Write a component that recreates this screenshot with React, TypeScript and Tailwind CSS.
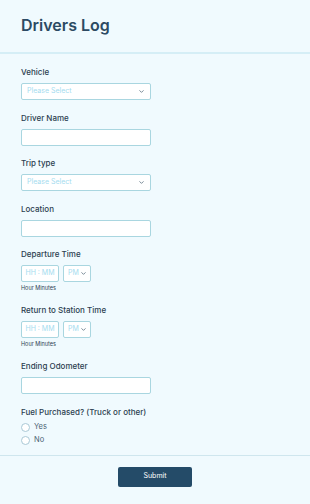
import { ChevronDown } from 'lucide-react';

function Label({ children }: { children: React.ReactNode }) {
  return <div className="text-[8px] font-medium text-[#2c3e50] leading-[10px] mb-[6px]">{children}</div>;
}

function SelectBox() {
  return (
    <div className="w-[130px] h-[17px] bg-white border border-[#a9d6e0] rounded-[2px] flex items-center justify-between px-[5px]">
      <span className="text-[7px] text-[#a5dcef]">Please Select</span>
      <ChevronDown size={7} strokeWidth={2.5} className="text-[#4a6274]" />
    </div>
  );
}

function TextBox() {
  return <div className="w-[130px] h-[17px] bg-white border border-[#a9d6e0] rounded-[2px]" />;
}

function TimeField({ label }: { label: string }) {
  return (
    <div>
      <Label>{label}</Label>
      <div className="flex gap-[4px]">
        <div className="w-[38px] h-[17px] bg-white border border-[#a9d6e0] rounded-[2px] flex items-center justify-center">
          <span className="text-[7px] text-[#a5dcef] whitespace-nowrap">HH : MM</span>
        </div>
        <div className="w-[28px] h-[17px] bg-white border border-[#a9d6e0] rounded-[2px] flex items-center justify-between pl-[4px] pr-[3px]">
          <span className="text-[7px] text-[#a5dcef]">PM</span>
          <ChevronDown size={7} strokeWidth={2.5} className="text-[#4a6274]" />
        </div>
      </div>
      <div className="text-[5.5px] text-[#2c3e50] mt-[3px] leading-[7.5px]">Hour Minutes</div>
    </div>
  );
}

function Radio({ label }: { label: string }) {
  return (
    <div className="flex items-center gap-[4px] h-[9px]">
      <div className="w-[9px] h-[9px] rounded-full bg-white border border-[#a9c9d6]" />
      <span className="text-[7.5px] text-[#4a6274]">{label}</span>
    </div>
  );
}

export default function App() {
  return (
    <div className="w-[310px] h-[504px] bg-[#f0fafe] overflow-hidden" style={{ fontFamily: 'Inter, "Noto Sans", sans-serif' }}>
      <div className="h-[52px] px-[21px] pt-[15px]">
        <h1 className="text-[16px] font-semibold text-[#2c4a63] leading-[20px]">Drivers Log</h1>
      </div>
      <div className="h-[2px] bg-[#d5eef6]" />
      <div className="px-[21px] pt-[13px] flex flex-col gap-[12.5px]">
        <div>
          <Label>Vehicle</Label>
          <SelectBox />
        </div>
        <div>
          <Label>Driver Name</Label>
          <TextBox />
        </div>
        <div>
          <Label>Trip type</Label>
          <SelectBox />
        </div>
        <div>
          <Label>Location</Label>
          <TextBox />
        </div>
        <TimeField label="Departure Time" />
        <TimeField label="Return to Station Time" />
        <div>
          <Label>Ending Odometer</Label>
          <TextBox />
        </div>
        <div>
          <div className="text-[8px] font-medium text-[#2c3e50] leading-[10px] mb-[6px]">Fuel Purchased? (Truck or other)</div>
          <div className="flex flex-col gap-[4px]">
            <Radio label="Yes" />
            <Radio label="No" />
          </div>
        </div>
      </div>
      <div className="h-[1px] bg-[#cfe6ee] mt-[10px]" />
      <div className="flex justify-center pt-[11px]">
        <button className="w-[74px] h-[20px] bg-[#244b68] rounded-[2px] text-white text-[7px]">Submit</button>
      </div>
    </div>
  );
}
